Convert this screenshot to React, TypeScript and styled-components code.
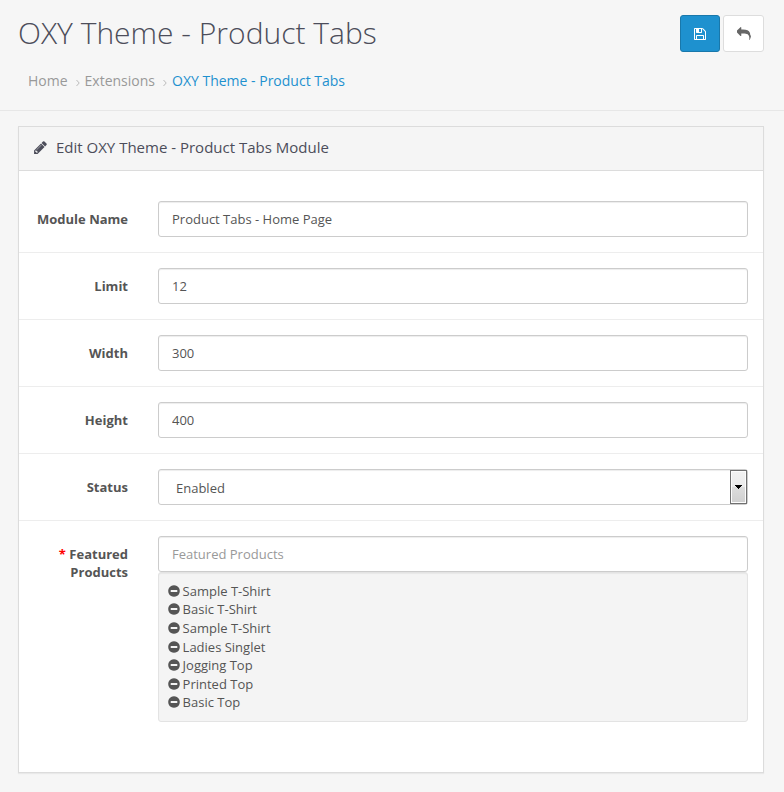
import React from "react";
import styled, { createGlobalStyle, css } from "styled-components";

const Global = createGlobalStyle`
  *, *::before, *::after { box-sizing: border-box; }
  body {
    margin: 0;
    min-height: 792px;
    background: #f6f6f6;
    color: #4c4d5a;
    font-family: "Open Sans", "Noto Sans", sans-serif;
    font-size: 13px;
    line-height: 18px;
  }
`;

const Header = styled.header`
  display: flex;
  justify-content: space-between;
  height: 111px;
  padding: 15px 20px 0 18px;
  border-bottom: 1px solid #e7e7e7;
`;

const Title = styled.h1`
  margin: 0;
  font-size: 30px;
  font-weight: 300;
  line-height: 36px;
  white-space: nowrap;
`;

const Breadcrumb = styled.ol`
  display: flex;
  align-items: center;
  margin: 20px 0 0;
  padding: 0 0 0 10px;
  list-style: none;
  font-size: 14px;
  line-height: 20px;
  white-space: nowrap;
`;

const Crumb = styled.li<{ $current?: boolean }>`
  display: flex;
  align-items: center;
  color: ${(p) => (p.$current ? "#1e91cf" : "#999")};
`;

const Chevron = styled.svg`
  width: 4px;
  height: 6px;
  margin: 3px 5px 0 8px;
  overflow: visible;
`;

const Actions = styled.div`
  display: flex;
  gap: 3px;
`;

const Button = styled.button<{ $primary?: boolean }>`
  display: flex;
  align-items: center;
  justify-content: center;
  width: ${(p) => (p.$primary ? 40 : 41)}px;
  height: 37px;
  padding: 0;
  border: 1px solid ${(p) => (p.$primary ? "#1978ab" : "#ddd")};
  border-radius: 3px;
  background: ${(p) => (p.$primary ? "#1e91cf" : "#fff")};
  color: ${(p) => (p.$primary ? "#fff" : "#666")};
`;

const Glyph = styled.svg<{ $size: number }>`
  display: block;
  flex: none;
  width: ${(p) => p.$size}px;
  height: ${(p) => p.$size}px;
  fill: currentColor;
`;

const Panel = styled.section`
  height: 647px;
  margin: 15px 20px 0 18px;
  border: 1px solid #dcdcdc;
  background: #fff;
  box-shadow: 0 1px 1px rgba(0, 0, 0, 0.05);
`;

const PanelHeading = styled.div`
  display: flex;
  align-items: center;
  gap: 8px;
  height: 44px;
  padding: 0 14px 2px;
  border-bottom: 1px solid #dcdcdc;
  background: #f5f5f5;
`;

const PanelTitle = styled.h3`
  margin: 0;
  padding-bottom: 2px;
  font-size: 15px;
  font-weight: 400;
  line-height: 20px;
`;

const Form = styled.form`
  padding-top: 15px;
`;

const Row = styled.div`
  display: grid;
  grid-template-columns: 109px 590px;
  column-gap: 30px;
  padding: 15px 0;
  color: #555;

  & + & {
    border-top: 1px solid #ededed;
  }
`;

const Label = styled.label`
  padding-top: 9px;
  font-weight: 700;
  line-height: 18px;
  text-align: right;
`;

const Required = styled.span`
  color: #f00;
`;

const field = css`
  display: block;
  width: 100%;
  height: 36px;
  border: 1px solid #ccc;
  border-radius: 3px;
  background: #fff;
  color: #555;
  font: 400 13px/18px "Open Sans", "Noto Sans", sans-serif;
  box-shadow: inset 0 1px 1px rgba(0, 0, 0, 0.075);
`;

const Input = styled.input`
  ${field}
  padding: 8px 13px;

  &::placeholder {
    color: #999;
    opacity: 1;
  }
`;

const Select = styled.div`
  ${field}
  display: flex;
  align-items: center;
  justify-content: space-between;
  padding: 0 0 0 17px;
`;

const SelectText = styled.span`
  padding-top: 2px;
`;

const SelectArrow = styled.span`
  display: flex;
  align-items: center;
  justify-content: center;
  align-self: stretch;
  width: 17px;
  border: 1px solid #707070;
  background: linear-gradient(#f2f2f2 0%, #ebebeb 50%, #dddddd 50%, #cfcfcf 100%);
  box-shadow: inset 0 0 0 1px #fcfcfc;
  color: #000;
`;

const Well = styled.div`
  height: 150px;
  padding: 9px;
  border: 1px solid #e3e3e3;
  border-radius: 3px;
  background: #f4f4f4;
  box-shadow: inset 0 1px 1px rgba(0, 0, 0, 0.05);
`;

const Product = styled.div`
  display: flex;
  align-items: flex-start;
  gap: 2.6px;
  height: 18px;

  &:nth-child(2),
  &:nth-child(3),
  &:nth-child(5) {
    height: 19px;
  }

  svg {
    margin-top: 3px;
  }
`;

const paths = {
  save: "M512 1536h768v-384h-768v384zm896 0h128v-896q0-14-10-38.5t-20-34.5l-281-281q-10-10-34-20t-39-10v416q0 40-28 68t-68 28h-576q-40 0-68-28t-28-68v-416h-128v1280h128v-416q0-40 28-68t68-28h832q40 0 68 28t28 68v416zm-384-928v-320q0-13-9.5-22.5t-22.5-9.5h-192q-13 0-22.5 9.5t-9.5 22.5v320q0 13 9.5 22.5t22.5 9.5h192q13 0 22.5-9.5t9.5-22.5zm640 32v928q0 40-28 68t-68 28h-1344q-40 0-68-28t-28-68v-1344q0-40 28-68t68-28h928q40 0 88 20t76 48l280 280q28 28 48 76t20 88z",
  reply: "M1792 1120q0 166-127 451-3 7-10.5 24t-13.5 30-13 22q-12 17-28 17-15 0-23.5-10t-8.5-25q0-9 2.5-26.5t2.5-23.5q5-68 5-123 0-112-19.5-200.5t-54-153.5-89-112-118-80-149.5-48-175.5-20.5-200.5-6h-224v256q0 26-19 45t-45 19-45-19l-512-512q-19-19-19-45t19-45l512-512q19-19 45-19t45 19 19 45v256h224q713 0 875 403 53 134 53 333z",
  pencil: "M491 1536l91-91-235-235-91 91v107h128v128h107zm523-928q0-22-22-22-10 0-17 7l-542 542q-7 7-7 17 0 22 22 22 10 0 17-7l542-542q7-7 7-17zm-54-192l416 416-832 832h-416v-416zm683 96q0 53-37 90l-166 166-416-416 166-165q36-38 90-38 53 0 91 38l235 234q37 39 37 91z",
  minus: "M1344 960v-128q0-26-19-45t-45-19h-768q-26 0-45 19t-19 45v128q0 26 19 45t45 19h768q26 0 45-19t19-45zm320-64q0 209-103 385.5t-279.5 279.5-385.5 103-385.5-103-279.5-279.5-103-385.5 103-385.5 279.5-279.5 385.5-103 385.5 103 279.5 279.5 103 385.5z",
};

function Icon({ name, size, viewBox = "0 0 1792 1792" }: { name: keyof typeof paths; size: number; viewBox?: string }) {
  return (
    <Glyph $size={size} viewBox={viewBox} aria-hidden="true">
      <path d={paths[name]} />
    </Glyph>
  );
}

function Separator() {
  return (
    <Chevron viewBox="0 0 4 6" aria-hidden="true">
      <path d="M0.5 0L3.2 3L0.5 6" fill="none" stroke="#bbb" />
    </Chevron>
  );
}

const fields = [
  { label: "Module Name", value: "Product Tabs - Home Page" },
  { label: "Limit", value: "12" },
  { label: "Width", value: "300" },
  { label: "Height", value: "400" },
];

const products = [
  "Sample T-Shirt",
  "Basic T-Shirt",
  "Sample T-Shirt",
  "Ladies Singlet",
  "Jogging Top",
  "Printed Top",
  "Basic Top",
];

export default function App() {
  return (
    <>
      <Global />
      <Header>
        <div>
          <Title>OXY Theme - Product Tabs</Title>
          <Breadcrumb>
            <Crumb>Home<Separator /></Crumb>
            <Crumb>Extensions<Separator /></Crumb>
            <Crumb $current>OXY Theme - Product Tabs</Crumb>
          </Breadcrumb>
        </div>
        <Actions>
          <Button $primary aria-label="Save"><Icon name="save" size={14} /></Button>
          <Button aria-label="Cancel"><Icon name="reply" size={14} /></Button>
        </Actions>
      </Header>
      <Panel>
        <PanelHeading>
          <Icon name="pencil" size={15} />
          <PanelTitle>Edit OXY Theme - Product Tabs Module</PanelTitle>
        </PanelHeading>
        <Form>
          {fields.map((f) => (
            <Row key={f.label}>
              <Label>{f.label}</Label>
              <Input defaultValue={f.value} />
            </Row>
          ))}
          <Row>
            <Label>Status</Label>
            <Select>
              <SelectText>Enabled</SelectText>
              <SelectArrow>
                <svg width="7" height="4" viewBox="0 0 7 4" shapeRendering="crispEdges"><path d="M0 0H7V1H6V2H5V3H4V4H3V3H2V2H1V1H0Z" /></svg>
              </SelectArrow>
            </Select>
          </Row>
          <Row>
            <Label><Required>*</Required> Featured Products</Label>
            <div>
              <Input placeholder="Featured Products" />
              <Well>
                {products.map((name, i) => (
                  <Product key={i}>
                    <Icon name="minus" size={12} viewBox="100 100 1592 1592" />
                    {name}
                  </Product>
                ))}
              </Well>
            </div>
          </Row>
        </Form>
      </Panel>
    </>
  );
}
